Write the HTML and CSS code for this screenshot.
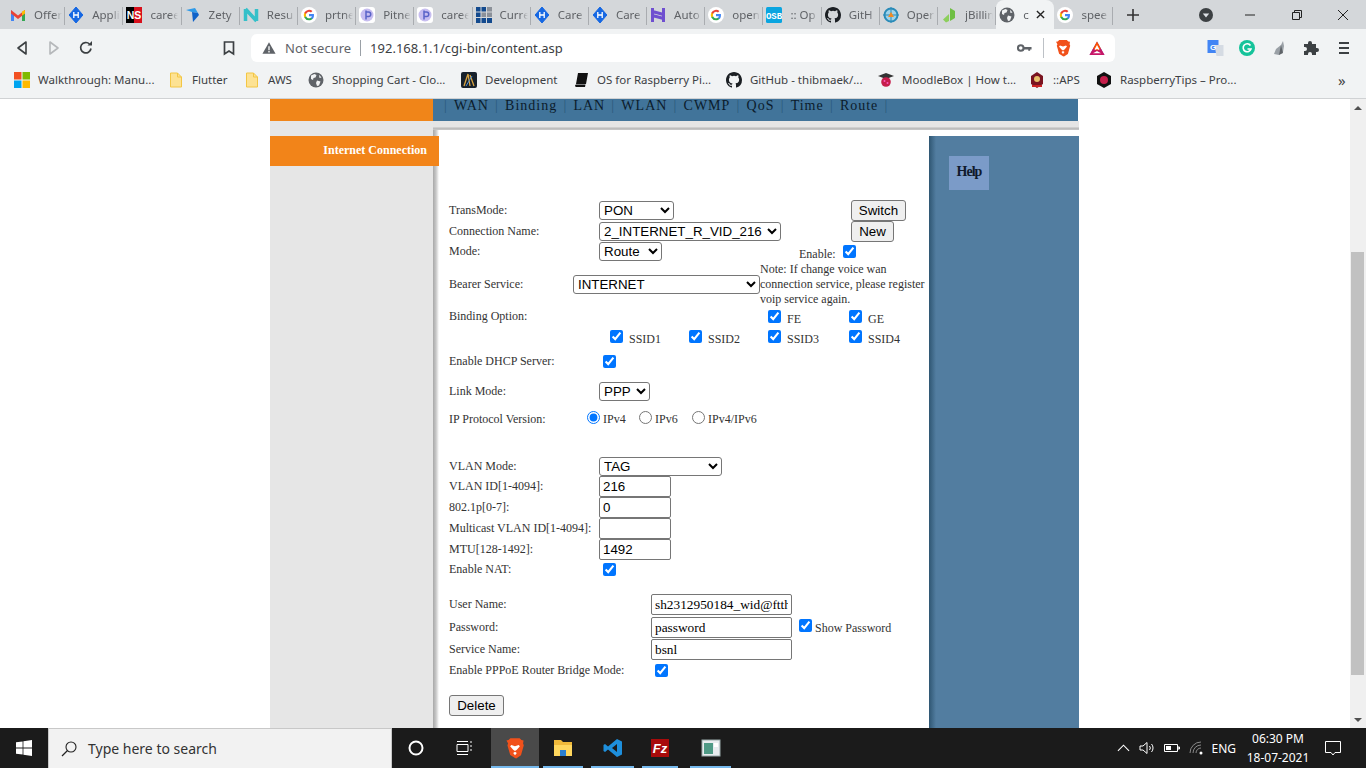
FILE: index.html
```html
<!DOCTYPE html>
<html lang="en">
<head>
  <meta charset="UTF-8" />
  <title>content.asp</title>
  <link rel="stylesheet" href="styles.css">
</head>
<body>
  <svg class="defs" width="0" height="0">
    <symbol id="g" viewBox="0 0 18 18">
      <circle cx="9" cy="9" r="9" fill="#fff"/>
      <path d="M14.6 9.2c0-.4 0-.8-.1-1.200H9v2.300h3.200a2.700 2.700 0 0 1-1.200 1.800v1.500h1.900c1.100-1 1.700-2.600 1.700-4.400z" fill="#4285f4"/>
      <path d="M9 15c1.600 0 3-.5 3.900-1.400L11 12.100c-.5.400-1.200.6-2 .6-1.500 0-2.800-1-3.300-2.400h-2v1.500A6 6 0 0 0 9 15z" fill="#34a853"/>
      <path d="M5.700 10.300a3.600 3.600 0 0 1 0-2.300V6.500h-2a6 6 0 0 0 0 5.300z" fill="#fbbc05"/>
      <path d="M9 5.400c.9 0 1.600.3 2.200.9l1.700-1.700A6 6 0 0 0 3.700 6.500l2 1.500C6.200 6.500 7.500 5.400 9 5.400z" fill="#ea4335"/>
    </symbol>
    <symbol id="hx" viewBox="0 0 16 16">
      <path d="M8 0l6.900 8L8 16 1.100 8z" fill="#1668e3" stroke="#1668e3" stroke-linejoin="round"/>
      <path d="M5.800 5v6M10.200 5v6M5.800 8h4.400" stroke="#fff" stroke-width="1.300" fill="none"/>
    </symbol>
    <symbol id="pp" viewBox="0 0 16 16">
      <rect width="16" height="16" rx="3" fill="#fff"/>
      <circle cx="8" cy="8" r="6.500" fill="#c7bdf0"/>
      <path d="M7 3.500v9M7 5h2.500a2 2 0 0 1 0 4.500H7" stroke="#5a63c8" stroke-width="1.500" fill="none"/>
    </symbol>
    <symbol id="gh" viewBox="0 0 16 16">
      <path fill="currentColor" d="M8 0C3.580 0 0 3.580 0 8c0 3.540 2.290 6.530 5.470 7.590.4.070.55-.170.55-.380 0-.190-.010-.820-.010-1.490-2.010.370-2.530-.490-2.690-.940-.090-.230-.480-.940-.820-1.130-.280-.150-.680-.520-.010-.530.630-.010 1.080.580 1.230.820.720 1.210 1.870.870 2.330.660.070-.520.280-.870.510-1.070-1.780-.200-3.640-.890-3.640-3.950 0-.870.310-1.590.820-2.150-.080-.200-.360-1.020.080-2.120 0 0 .670-.210 2.200.820a7.420 7.420 0 0 1 4 0c1.530-1.040 2.200-.820 2.200-.820.440 1.100.160 1.920.080 2.120.510.560.820 1.270.820 2.150 0 3.070-1.870 3.750-3.650 3.950.290.250.540.730.540 1.480 0 1.070-.010 1.930-.010 2.200 0 .210.150.460.550.380A8.010 8.010 0 0 0 16 8c0-4.420-3.580-8-8-8z"/>
    </symbol>
    <symbol id="globe" viewBox="0 0 16 16">
      <circle cx="8" cy="8" r="7.500" fill="currentColor"/>
      <path d="M3 3.500l3.500-1.500 2 1-1 2.500-2 .5-.5 2-2-1zM9 8.500l3.500 1-1.500 4-2 .5-1-3zM11 2.800l2.500 2.700-2 .5z" fill="#f1f3f4"/>
    </symbol>
    <symbol id="folder" viewBox="0 0 16 16">
      <path d="M2.500 1h7l4 4v10h-11z" fill="#fde293" stroke="#f3c644"/>
      <path d="M9.500 1v4h4" fill="none" stroke="#f3c644"/>
    </symbol>
    <symbol id="brave" viewBox="0 0 16 18">
      <path d="M4.200 1h7.600l1.500 1.500 1.700.300-.4 2.500.6 1.500-2.300 8.200-3.900 2.500-1-.3-3.900-2.400L1.800 6.800l.6-1.500L1 2.800l1.700-.300z" fill="#f1511b"/>
      <path d="M5 6.500l3 1 3-1 1 1-2.500 3-1.500 1-1.500-1L4 7.500zM6.500 13l1.500-1 1.500 1-1.500 2z" fill="#fff"/>
    </symbol>
  </svg>

  <header class="tabstrip">
    <div class="tab"><svg class="fav" viewBox="0 0 16 16"><path d="M1 3v11h3V7z" fill="#4285f4"/><path d="M15 3v11h-3V7z" fill="#34a853"/><path d="M1 3l7 5.500L15 3v3.500L8 12 1 6.500z" fill="#ea4335"/><path d="M12 4.500L15 3v3.500l-3 2z" fill="#fbbc05"/></svg><span class="tab-t">Offer</span></div>
    <div class="tab"><svg class="fav"><use href="#hx"/></svg><span class="tab-t">Appli</span></div>
    <div class="tab"><svg class="fav" viewBox="0 0 16 16"><rect width="8" height="16"/><rect x="8" width="8" height="16" fill="#d8101c"/><text x="8" y="12" font-size="10.500" font-weight="700" fill="#fff" text-anchor="middle" font-family="Liberation Sans">NS</text></svg><span class="tab-t">caree</span></div>
    <div class="tab"><svg class="fav" viewBox="0 0 16 16"><path d="M1 3l9-2 3 5-6-1z" fill="#2f9ae8"/><path d="M7 5l6 1 1 2-6 7z" fill="#0f62c9"/></svg><span class="tab-t">Zety</span></div>
    <div class="tab"><svg class="fav" viewBox="0 0 16 16"><path d="M2.500 2v12M13.500 2v12M2.500 2l11 12" stroke="#35c0c9" stroke-width="3.500" fill="none"/></svg><span class="tab-t">Resu</span></div>
    <div class="tab"><svg class="fav"><use href="#g"/></svg><span class="tab-t">prtne</span></div>
    <div class="tab"><svg class="fav"><use href="#pp"/></svg><span class="tab-t">Pitne</span></div>
    <div class="tab"><svg class="fav"><use href="#pp"/></svg><span class="tab-t">caree</span></div>
    <div class="tab"><svg class="fav" viewBox="0 0 16 16"><path d="M0 0h4.500v4.500H0zM5.500 0H10v4.500H5.500zM0 5.500h4.500V10H0zM0 11h4.500v5H0zM5.500 11H10v5H5.500z" fill="#134a8e"/><path d="M11 0h5v4.500h-5zM5.500 5.500H10V10H5.500zM11 5.500h5V10h-5z" fill="#8c9199"/><path d="M11 11h5v5h-5z" fill="#134a8e"/></svg><span class="tab-t">Curre</span></div>
    <div class="tab"><svg class="fav"><use href="#hx"/></svg><span class="tab-t">Care</span></div>
    <div class="tab"><svg class="fav"><use href="#hx"/></svg><span class="tab-t">Care</span></div>
    <div class="tab"><svg class="fav" viewBox="0 0 16 16"><path d="M2.500 1v14M13.500 1v14M2.500 4.500l11 3M2.500 8.500l11 3" stroke="#6f4fd0" stroke-width="3" fill="none"/></svg><span class="tab-t">Auto</span></div>
    <div class="tab"><svg class="fav"><use href="#g"/></svg><span class="tab-t">open</span></div>
    <div class="tab"><svg class="fav" viewBox="0 0 16 16"><rect width="16" height="16" rx="1.500" fill="#0aa5e0"/><text x="8" y="12" font-size="9" font-weight="700" fill="#fff" text-anchor="middle" font-family="Liberation Mono">OSB</text></svg><span class="tab-t">:: Op</span></div>
    <div class="tab"><svg class="fav gh"><use href="#gh"/></svg><span class="tab-t">GitH</span></div>
    <div class="tab"><svg class="fav" viewBox="0 0 16 16"><circle cx="8" cy="8" r="6.500" fill="#9fd3ea" stroke="#2a8bb8" stroke-width="2"/><path d="M8 0v16M0 8h16" stroke="#2a8bb8"/><path d="M5 10l3-5 3 5z" fill="#f08a24"/></svg><span class="tab-t">Oper</span></div>
    <div class="tab"><svg class="fav" viewBox="0 0 16 16"><path d="M9 1l5 3v7l-5 3z" fill="#6fbf44"/><path d="M8 7v7l-3 1.500-3-3z" fill="#8ccf5c"/></svg><span class="tab-t">jBillin</span></div>
    <div class="tab tab-active"><svg class="fav gl"><use href="#globe"/></svg><span class="tab-t tab-t-short">c</span><svg class="tab-x" viewBox="0 0 10 10"><path d="M1 1l8 8M9 1l-8 8" stroke="#222" stroke-width="1.500"/></svg></div>
    <div class="tab"><svg class="fav"><use href="#g"/></svg><span class="tab-t">spee</span></div>
    <svg class="newtab" viewBox="0 0 14 14"><path d="M7 1v12M1 7h12" stroke="#333" stroke-width="1.600"/></svg>
    <div class="win-btns">
      <svg class="wb-down" viewBox="0 0 14 14"><circle cx="7" cy="7" r="7" fill="#3c4043"/><path d="M3.800 5.500h6.400L7 9.500z" fill="#dee1e6"/></svg>
      <svg class="wb" viewBox="0 0 12 12"><path d="M1 6h10" stroke="#222"/></svg>
      <svg class="wb" viewBox="0 0 12 12"><path d="M1.500 3.500h7v7h-7zM3.500 3.500v-2h7v7h-2" stroke="#222" fill="none"/></svg>
      <svg class="wb" viewBox="0 0 12 12"><path d="M1 1l10 10M11 1L1 11" stroke="#222"/></svg>
    </div>
  </header>

  <div class="toolbar">
    <svg class="tb tb-back" viewBox="0 0 16 16"><path d="M12 2L4 8l8 6z" fill="none" stroke="#3c4043" stroke-width="1.600" stroke-linejoin="round"/></svg>
    <svg class="tb tb-fwd" viewBox="0 0 16 16"><path d="M4 2l8 6-8 6z" fill="none" stroke="#b6b8bb" stroke-width="1.600" stroke-linejoin="round"/></svg>
    <svg class="tb tb-reload" viewBox="0 0 16 16"><path d="M13 8.500A5.200 5.200 0 1 1 11.500 4" fill="none" stroke="#3c4043" stroke-width="1.700"/><path d="M9.500 5.500H14V1z" fill="#3c4043"/></svg>
    <svg class="tb tb-mark" viewBox="0 0 16 16"><path d="M3.500 2h9v12L8 11l-4.500 3z" fill="none" stroke="#3c4043" stroke-width="1.700"/></svg>
    <div class="omnibox">
      <svg class="warn" viewBox="0 0 16 16"><path d="M8 1.500l7.500 13H.5z" fill="#5f6368"/><path d="M8 6v4.500M8 11.500v1.500" stroke="#fff" stroke-width="1.500"/></svg>
      <span class="not-secure">Not secure</span>
      <span class="url">192.168.1.1/cgi-bin/content.asp</span>
      <svg class="key" viewBox="0 0 16 10"><circle cx="4" cy="5" r="3" fill="none" stroke="#5f6368" stroke-width="2.200"/><path d="M7 4h8.500v2.500h-1.500V8h-2V6.500H7z" fill="#5f6368"/></svg>
      <span class="omni-sep"></span>
      <svg class="omni-brave"><use href="#brave"/></svg>
      <svg class="omni-bat" viewBox="0 0 18 16"><path d="M9 1.500l7.500 13.500h-15z" fill="#662d91"/><path d="M9 1.500l3.800 7L9 11l-3.800-2.500z" fill="#ff5000"/><path d="M9 5l-3 5.500L9 9l3 1.500z" fill="#fff"/><path d="M1.500 15h15l-3.700-6.500-3.800 2.500-3.800-2.500z" fill="#e0105c" opacity=".8"/><path d="M5 13.200h8L9 11z" fill="#fff"/></svg>
    </div>
    <svg class="ext ext-gt" viewBox="0 0 16 16"><rect width="11" height="13" fill="#4285f4"/><path d="M7 5h9v11H9z" fill="#d5dbe3"/><text x="5.500" y="9.500" font-size="8" font-weight="700" fill="#fff" text-anchor="middle" font-family="Liberation Sans">G</text></svg>
    <svg class="ext ext-gr" viewBox="0 0 16 16"><circle cx="8" cy="8" r="8" fill="#15c39a"/><path d="M11.500 5.500A4 4 0 1 0 12 9H8.500" fill="none" stroke="#fff" stroke-width="1.600"/></svg>
    <svg class="ext ext-gy" viewBox="0 0 16 16"><path d="M11 1L9 5 4 9l-2 5 5 1 4-3 1-6z" fill="#9aa0a6"/><path d="M9 5l2 8-4 2z" fill="#5f6368"/></svg>
    <svg class="ext ext-pz" viewBox="0 0 16 16"><path d="M1 4h4V3a2 2 0 0 1 4 0v1h4v4h1a2 2 0 0 1 0 4h-1v3H9v-1a2 2 0 0 0-4 0v1H1v-4h1a2 2 0 0 0 0-4H1z" fill="#3c4043"/></svg>
    <svg class="ext ext-mn" viewBox="0 0 16 16"><path d="M3 3h10M3 8h10M3 13h10" stroke="#3c4043" stroke-width="2"/></svg>
  </div>

  <nav class="bookmarks">
    <a class="bm"><svg class="bm-i" viewBox="0 0 16 16"><path d="M0 0h7.500v7.500H0z" fill="#f25022"/><path d="M8.500 0H16v7.500H8.500z" fill="#7fba00"/><path d="M0 8.500h7.500V16H0z" fill="#00a4ef"/><path d="M8.500 8.500H16V16H8.500z" fill="#ffb900"/></svg>Walkthrough: Manu...</a>
    <a class="bm"><svg class="bm-i"><use href="#folder"/></svg>Flutter</a>
    <a class="bm"><svg class="bm-i"><use href="#folder"/></svg>AWS</a>
    <a class="bm"><svg class="bm-i gl"><use href="#globe"/></svg>Shopping Cart - Clo...</a>
    <a class="bm"><svg class="bm-i" viewBox="0 0 16 16"><rect width="16" height="16" rx="2" fill="#17212b"/><path d="M3 14L7 2l2 12M9 3l4 11" stroke="#d9a441" stroke-width="1.300" fill="none"/><path d="M5 14l6-10" stroke="#4b8fd6"/></svg>Development</a>
    <a class="bm"><svg class="bm-i" viewBox="0 0 16 16"><path d="M5 1h10l-2 11H3zM3 12.500h9.500L12 15H3a1.300 1.300 0 0 1 0-2.500z" fill="#111"/></svg>OS for Raspberry Pi...</a>
    <a class="bm"><svg class="bm-i gh"><use href="#gh"/></svg>GitHub - thibmaek/...</a>
    <a class="bm"><svg class="bm-i" viewBox="0 0 16 16"><path d="M0 4l8-3 8 3-8 3z" fill="#333"/><circle cx="8" cy="10" r="4.800" fill="#c51d4a"/><circle cx="6.500" cy="9" r="1" fill="#f5b"/><circle cx="9.500" cy="11" r="1" fill="#f5b"/></svg>MoodleBox | How t...</a>
    <a class="bm"><svg class="bm-i" viewBox="0 0 16 16"><path d="M8 0l6 4v8l-6 4-6-4V4z" fill="#7a1420"/><circle cx="8" cy="7" r="3" fill="#e8c06a"/><path d="M3 13h10v2H3z" fill="#c22"/></svg>::APS</a>
    <a class="bm"><svg class="bm-i" viewBox="0 0 16 16"><path d="M8 0l7 4v8l-7 4-7-4V4z" fill="#111"/><circle cx="8" cy="8" r="4" fill="#c51d4a"/></svg>RaspberryTips – Pro...</a>
    <span class="bm-more">»</span>
  </nav>

  <div class="viewport">
    <div class="frame">
      <div class="head">
        <div class="head-logo"></div>
        <div class="head-nav">
          <span class="sep">|</span><span>WAN</span>
          <span class="sep">|</span><span>Binding</span>
          <span class="sep">|</span><span>LAN</span>
          <span class="sep">|</span><span>WLAN</span>
          <span class="sep">|</span><span>CWMP</span>
          <span class="sep">|</span><span>QoS</span>
          <span class="sep">|</span><span>Time</span>
          <span class="sep">|</span><span>Route</span>
          <span class="sep">|</span>
        </div>
      </div>
      <div class="columns">
        <aside class="sidebar">
          <div class="side-item">Internet Connection</div>
        </aside>
        <div class="right">
          <div class="band"></div>
          <div class="panels">
            <main class="main">
              <form class="wan-form">
                <div class="row h21">
                  <label class="lbl">TransMode:</label>
                  <select class="s-trans"><option>PON</option></select>
                  <button type="button" class="btn b-switch">Switch</button>
                </div>
                <div class="row h21">
                  <label class="lbl">Connection Name:</label>
                  <select class="s-conn"><option>2_INTERNET_R_VID_216</option></select>
                  <button type="button" class="btn b-new">New</button>
                </div>
                <div class="row h19">
                  <label class="lbl">Mode:</label>
                  <select class="s-mode"><option>Route</option></select>
                  <span class="enable-lbl">Enable:</span>
                  <input type="checkbox" class="cb" checked>
                </div>
                <div class="row h45 mt1">
                  <label class="lbl lbl-bearer">Bearer Service:</label>
                  <select class="s-bearer"><option>INTERNET</option></select>
                  <p class="note">Note: If change voice wan connection service, please register voip service again.</p>
                </div>
                <div class="row h20 binds">
                  <label class="lbl lbl-bind">Binding Option:</label>
                  <span class="bind"></span>
                  <span class="bind"></span>
                  <span class="bind b3"><input type="checkbox" class="cb" checked><span class="low">FE</span></span>
                  <span class="bind"><input type="checkbox" class="cb" checked><span class="low">GE</span></span>
                </div>
                <div class="row h20 binds">
                  <span class="lbl lbl-bind"></span>
                  <span class="bind"><input type="checkbox" class="cb" checked><span class="low">SSID1</span></span>
                  <span class="bind"><input type="checkbox" class="cb" checked><span class="low">SSID2</span></span>
                  <span class="bind b3"><input type="checkbox" class="cb" checked><span class="low">SSID3</span></span>
                  <span class="bind"><input type="checkbox" class="cb" checked><span class="low">SSID4</span></span>
                </div>
                <div class="row h29">
                  <label class="lbl lbl-dhcp">Enable DHCP Server:</label>
                  <input type="checkbox" class="cb" checked>
                </div>
                <div class="row h31">
                  <label class="lbl">Link Mode:</label>
                  <select class="s-link"><option>PPP</option></select>
                </div>
                <div class="row h21 radios">
                  <label class="lbl lbl-ip">IP Protocol Version:</label>
                  <input type="radio" name="ipv" class="rd" checked><span class="r-t r1 low">IPv4</span>
                  <input type="radio" name="ipv" class="rd"><span class="r-t r2 low">IPv6</span>
                  <input type="radio" name="ipv" class="rd"><span class="r-t low">IPv4/IPv6</span>
                </div>
                <div class="row h19 vlan-first">
                  <label class="lbl">VLAN Mode:</label>
                  <select class="s-vlan"><option>TAG</option></select>
                </div>
                <div class="row h21"><label class="lbl">VLAN ID[1-4094]:</label><input class="txt" value="216"></div>
                <div class="row h21"><label class="lbl">802.1p[0-7]:</label><input class="txt" value="0"></div>
                <div class="row h21"><label class="lbl">Multicast VLAN ID[1-4094]:</label><input class="txt"></div>
                <div class="row h21"><label class="lbl">MTU[128-1492]:</label><input class="txt" value="1492"></div>
                <div class="row h19">
                  <label class="lbl lbl-dhcp">Enable NAT:</label>
                  <input type="checkbox" class="cb" checked>
                </div>
                <div class="row h21 user-first">
                  <label class="lbl lbl-user">User Name:</label>
                  <input class="txt txt-user" value="sh2312950184_wid@ftth">
                </div>
                <div class="row h21 mt2">
                  <label class="lbl lbl-user">Password:</label>
                  <input class="txt txt-user" value="password">
                  <input type="checkbox" class="cb cb-show" checked><span class="show-t">Show Password</span>
                </div>
                <div class="row h21 mt1">
                  <label class="lbl lbl-user">Service Name:</label>
                  <input class="txt txt-user" value="bsnl">
                </div>
                <div class="row h21">
                  <label class="lbl lbl-pppoe">Enable PPPoE Router Bridge Mode:</label>
                  <input type="checkbox" class="cb" checked>
                </div>
                <button type="button" class="btn b-delete">Delete</button>
              </form>
            </main>
            <aside class="help">
              <div class="help-btn">Help</div>
            </aside>
          </div>
        </div>
      </div>
    </div>
    <div class="scrollbar">
      <div class="sb-btn"><span class="arrow-up"></span></div>
      <div class="sb-thumb"></div>
      <div class="sb-btn sb-btn-end"><span class="arrow-down"></span></div>
    </div>
  </div>

  <footer class="taskbar">
    <svg class="tk-win" viewBox="0 0 16 16"><path d="M0 2.300l6.600-.9v6.200H0zM7.400 1.300L16 0v7.600H7.400zM0 8.400h6.600v6.200L0 13.700zM7.400 8.400H16V16l-8.600-1.300z" fill="#fff"/></svg>
    <div class="tk-search">
      <svg class="tk-glass" viewBox="0 0 16 16"><circle cx="10" cy="6" r="5" fill="none" stroke="#222" stroke-width="1.100"/><path d="M6.500 9.500L1 15" stroke="#222" stroke-width="1.200"/></svg>
      <span>Type here to search</span>
    </div>
    <div class="tk-slot tk-plain"><svg class="tk-ic" viewBox="0 0 16 16"><circle cx="8" cy="8" r="6.500" fill="none" stroke="#fff" stroke-width="2"/></svg></div>
    <div class="tk-slot tk-plain"><svg class="tk-ic" viewBox="0 0 16 16"><path d="M1 4.500h11v7H1zM1 1.500h11M1 14.500h11M15 1v2M15 5v2M15 9v2" fill="none" stroke="#fff"/></svg></div>
    <div class="tk-slot tk-app tk-active"><svg class="tk-app-i"><use href="#brave"/></svg></div>
    <div class="tk-slot tk-app tk-w48"><svg class="tk-app-i" viewBox="0 0 20 20"><path d="M1 2h7l2 2h9v14H1z" fill="#f0b93a"/><path d="M1 7h18v11H1z" fill="#ffd75e"/><path d="M7 12h6v6H7z" fill="#2a7fd1"/></svg></div>
    <div class="tk-slot tk-app tk-w50"><svg class="tk-app-i" viewBox="0 0 20 20"><path d="M14 1l5 2.500v13L14 19 5 11.500 2 14 .5 13v-6L2 6l3 2.500z" fill="#1e8fdc"/><path d="M14 6l-5 4 5 4z" fill="#1b1b1b"/></svg></div>
    <div class="tk-slot tk-app tk-w44"><svg class="tk-app-i" viewBox="0 0 20 20"><rect x="1" y="1" width="18" height="18" fill="#a80b0b"/><text x="10" y="15" font-size="13" font-weight="700" font-style="italic" fill="#fff" text-anchor="middle" font-family="Liberation Sans">Fz</text></svg></div>
    <div class="tk-slot tk-app tk-w58"><svg class="tk-app-i" viewBox="0 0 20 20"><rect x="1" y="2" width="18" height="16" fill="#e8ecef" stroke="#9aa"/><rect x="3" y="5" width="9" height="11" fill="#4f9a86"/><rect x="13" y="5" width="4" height="4" fill="#fff"/></svg></div>
    <div class="tray">
      <svg class="tr-chev" viewBox="0 0 14 8"><path d="M1 7l6-6 6 6" fill="none" stroke="#fff" stroke-width="1.200"/></svg>
      <svg class="tr-vol" viewBox="0 0 16 16"><path d="M1 6h3l4-3.500v11L4 10H1zM10.500 6a3 3 0 0 1 0 4M12.500 4a6 6 0 0 1 0 8" fill="none" stroke="#fff"/></svg>
      <svg class="tr-bat" viewBox="0 0 16 10"><path d="M.5 1.500h13v7H.5zM14 4h1.500v2H14z" fill="none" stroke="#fff"/><rect x="2" y="3" width="5" height="4" fill="#fff"/></svg>
      <svg class="tr-wifi" viewBox="0 0 16 16"><path d="M1 13A11 11 0 0 1 12 2M4 13A8 8 0 0 1 12 5M7 13a5 5 0 0 1 5-5" fill="none" stroke="#8a8a8a"/><circle cx="12" cy="13" r="1.500" fill="#fff"/></svg>
      <span class="tr-lang">ENG</span>
      <div class="tr-clock"><span>06:30 PM</span><span>18-07-2021</span></div>
      <svg class="tr-note" viewBox="0 0 16 16"><path d="M.5 1.500h15v11H10L8 15l-2-2.500H.5z" fill="none" stroke="#fff"/></svg>
    </div>
  </footer>
</body>
</html>
```

FILE: styles.css
```css
* {
  box-sizing: border-box;
}
html, body {
  margin: 0;
  height: 100%;
  overflow: hidden;
}
body {
  display: flex;
  flex-direction: column;
  width: 1366px;
  height: 768px;
  background: #fff;
  font-family: "Noto Sans", sans-serif;
  color: #222;
}
.defs {
  position: absolute;
}

/* browser chrome */
.tabstrip {
  display: flex;
  align-items: center;
  flex: none;
  height: 29px;
  padding-left: 7px;
  background: #d4d7da;
}
.tab {
  display: flex;
  align-items: center;
  flex: none;
  width: 58.2px;
  height: 29px;
  padding-left: 3px;
  position: relative;
}
.tab::after {
  content: "";
  position: absolute;
  right: 0;
  top: 7px;
  height: 18px;
  width: 1px;
  background: #a9acb0;
}
.tab-active {
  background: #f1f3f4;
  border-radius: 8px 8px 0 0;
}
.tab-active::after {
  display: none;
}
.fav {
  flex: none;
  width: 16px;
  height: 16px;
}
.gh {
  color: #1b1f23;
}
.gl {
  color: #5f6368;
}
.tab-t {
  flex: none;
  width: 28px;
  margin-left: 8px;
  overflow: hidden;
  white-space: nowrap;
  font-size: 11.5px;
  color: #5f6266;
  -webkit-mask-image: linear-gradient(90deg, #000 70%, transparent);
  mask-image: linear-gradient(90deg, #000 70%, transparent);
}
.tab-t-short {
  width: 10px;
}
.tab-x {
  width: 9px;
  height: 9px;
  margin-left: 3px;
}
.newtab {
  width: 14px;
  height: 14px;
  margin-left: 13px;
}
.win-btns {
  display: flex;
  align-items: center;
  margin-left: auto;
  gap: 34.5px;
  padding-right: 17px;
}
.wb-down {
  width: 14px;
  height: 14px;
  margin-right: -3.5px;
}
.wb {
  width: 12px;
  height: 12px;
}

.toolbar {
  display: flex;
  align-items: center;
  flex: none;
  height: 33px;
  padding-top: 5px;
  background: #f1f3f4;
}
.tb {
  flex: none;
  width: 16px;
  height: 16px;
}
.tb-back {
  margin-left: 14px;
}
.tb-fwd {
  margin-left: 16px;
}
.tb-reload {
  margin-left: 16px;
}
.tb-mark {
  margin-left: 127px;
}
.omnibox {
  display: flex;
  align-items: center;
  flex: none;
  width: 864px;
  height: 28px;
  margin-left: 14px;
  padding-left: 11px;
  background: #fff;
  border-radius: 6px;
  font-size: 13px;
}
.warn {
  width: 14px;
  height: 14px;
}
.not-secure {
  margin-left: 9px;
  padding-right: 9px;
  border-right: 1px solid #9aa0a6;
  line-height: 16px;
  color: #5f6368;
}
.url {
  margin-left: 9px;
  color: #3c4043;
}
.key {
  width: 15px;
  height: 10px;
  margin-left: auto;
}
.omni-sep {
  width: 1px;
  height: 20px;
  margin: 0 11px;
  background: #bdc1c6;
}
.omni-brave {
  width: 16px;
  height: 18px;
}
.omni-bat {
  width: 18px;
  height: 16px;
  margin: 0 9px 0 17px;
}
.ext {
  flex: none;
  width: 16px;
  height: 16px;
}
.ext-gt {
  margin-left: 92px;
  width: 17px;
}
.ext-gr {
  margin-left: 15px;
}
.ext-gy {
  margin-left: 17px;
}
.ext-pz {
  margin-left: 15px;
}
.ext-mn {
  margin-left: 17px;
}

.bookmarks {
  display: grid;
  grid-template-columns: 154px 76px 64px 153px 112px 153px 152px 151px 67px 242px auto;
  align-items: center;
  flex: none;
  height: 37px;
  padding-left: 14px;
  background: #f1f3f4;
  border-bottom: 1px solid #d0d2d4;
}
.bm {
  display: flex;
  align-items: center;
  padding-bottom: 2px;
  white-space: nowrap;
  font-size: 11.5px;
  color: #3c4043;
}
.bm-i {
  flex: none;
  width: 16px;
  height: 16px;
  margin: 2px 8px 0 0;
}
.bm-more {
  font-size: 15px;
  line-height: 15px;
  color: #444;
}

/* page */
.viewport {
  display: flex;
  flex: 1;
  min-height: 0;
  background: #fff;
}
.frame {
  display: flex;
  flex-direction: column;
  flex: none;
  width: 809px;
  margin-left: 270px;
  overflow: hidden;
}
.head {
  display: flex;
  flex: none;
  height: 22px;
}
.head-logo {
  flex: none;
  width: 163px;
  background: #f08519;
}
.head-nav {
  display: flex;
  align-items: center;
  gap: 6.2px;
  flex: none;
  width: 645px;
  padding: 0 0 9px 11px;
  background: #41749a;
  font-family: "Liberation Serif", serif;
  font-size: 14px;
  letter-spacing: 1px;
  color: #0c1c2c;
}
.sep {
  color: #2b5a7c;
}
.columns {
  display: flex;
  flex: 1;
  min-height: 0;
}
.sidebar {
  flex: none;
  width: 163px;
  padding-top: 15px;
  background: #e6e6e6;
}
.side-item {
  position: relative;
  z-index: 1;
  width: 169px;
  height: 30px;
  padding-right: 12px;
  background: #f28419;
  text-align: right;
  font-family: "Liberation Serif", serif;
  font-size: 12px;
  font-weight: 700;
  line-height: 28px;
  color: #fff;
}
.right {
  display: flex;
  flex-direction: column;
  flex: 1;
  min-width: 0;
}
.band {
  flex: none;
  height: 9px;
  background: linear-gradient(#e5e5e5 6px, #b9b9b9 7px, #c9c9c9 9px);
}
.panels {
  display: flex;
  flex: 1;
  min-height: 0;
}
.main {
  flex: none;
  width: 496px;
  padding: 70px 0 0 16px;
  background: linear-gradient(90deg, #a8a8a8, #c8c8c8 3px, #ececec 5px, #fff 6px) no-repeat left top / 6px 100%, #fff;
}
.help {
  flex: 1;
  margin-top: 6px;
  padding: 20px;
  background: linear-gradient(90deg, #2f5672, #527da0 7px);
}
.help-btn {
  width: 40px;
  height: 34px;
  background: #7b9bc8;
  text-align: center;
  font-family: "Liberation Serif", serif;
  font-size: 14px;
  font-weight: 700;
  letter-spacing: -1px;
  line-height: 32px;
  color: #101a2c;
}

/* form */
.wan-form {
  font-family: "Liberation Serif", serif;
  font-size: 12px;
  color: #333;
}
.row {
  display: flex;
  align-items: center;
}
.h19 { height: 19px; }
.h20 { height: 20px; }
.h21 { height: 21px; }
.h29 { height: 29px; }
.h31 { height: 31px; }
.h45 { height: 45px; }
.mt1 { margin-top: 1px; }
.mt2 { margin-top: 2px; }
.vlan-first {
  margin-top: 29px;
}
.user-first {
  margin-top: 15px;
}
.lbl {
  flex: none;
  width: 150px;
}
.lbl-bearer { width: 124px; }
.lbl-bind {
  width: 161px;
  margin-bottom: 2px;
}
.lbl-dhcp { width: 154px; }
.lbl-ip {
  width: 138px;
  margin-top: 4px;
}
.lbl-user { width: 202px; }
.lbl-pppoe { width: 206px; }
select, .btn, .txt {
  font-family: "Liberation Sans", sans-serif;
  font-size: 13.333px;
  color: #000;
}
select {
  flex: none;
  height: 19px;
  padding: 0;
  background: #fff;
  border: 1px solid #767676;
  border-radius: 3px;
}
.s-trans { width: 75px; }
.s-conn { width: 182px; }
.s-mode { width: 63px; }
.s-bearer { width: 187px; }
.s-link { width: 51px; }
.s-vlan { width: 123px; }
.btn {
  flex: none;
  height: 21px;
  padding: 0;
  background: #efefef;
  border: 1px solid #767676;
  border-radius: 3px;
}
.b-switch {
  width: 55px;
  margin-left: 177px;
}
.b-new {
  width: 43px;
  margin-left: 70px;
}
.b-delete {
  width: 55px;
  margin-top: 14px;
}
.enable-lbl {
  margin: 6px 0 0 137px;
  width: 44px;
}
.cb, .rd {
  flex: none;
  width: 13px;
  height: 13px;
  margin: 0;
}
.note {
  flex: none;
  width: 168px;
  margin: 0;
  line-height: 15px;
}
.bind {
  display: flex;
  align-items: center;
  gap: 6px;
  flex: none;
  width: 79px;
}
.bind.b3 {
  width: 81px;
}
.bind .cb {
  margin-bottom: 1px;
}
.low {
  margin-top: 4px;
}
.r-t {
  margin-left: 3px;
}
.r1 { width: 36px; }
.r2 { width: 37px; }
.txt {
  flex: none;
  width: 72px;
  height: 21px;
  padding: 1px 3px;
  background: #fff;
  border: 1px solid #767676;
  border-radius: 2px;
}
.txt-user {
  width: 141px;
  font-family: "Liberation Serif", serif;
  font-size: 13.333px;
}
.cb-show {
  margin: 0 0 4px 7px;
}
.show-t {
  margin: 1px 0 0 3px;
}

/* scrollbar */
.scrollbar {
  display: flex;
  flex-direction: column;
  flex: none;
  width: 16px;
  margin-left: auto;
  background: #f0f0f0;
}
.sb-btn {
  display: flex;
  justify-content: center;
  align-items: center;
  flex: none;
  height: 17px;
}
.sb-btn-end {
  margin-top: auto;
}
.arrow-up {
  border: 4px solid transparent;
  border-top: 0;
  border-bottom: 4px solid #505050;
}
.arrow-down {
  border: 4px solid transparent;
  border-bottom: 0;
  border-top: 4px solid #505050;
}
.sb-thumb {
  flex: none;
  width: 13px;
  height: 423px;
  margin: 136px 0 0 1px;
  background: #c1c1c1;
}

/* windows taskbar */
.taskbar {
  display: flex;
  align-items: center;
  flex: none;
  height: 40px;
  background: #1b1b1b;
}
.tk-win {
  flex: none;
  width: 16px;
  height: 16px;
  margin: 0 16px;
}
.tk-search {
  display: flex;
  align-items: center;
  flex: none;
  width: 344px;
  height: 40px;
  padding-left: 12px;
  background: #f2f2f2;
  border: 1px solid #c8c8c8;
  border-bottom: 0;
  font-size: 14px;
  color: #333;
}
.tk-glass {
  width: 16px;
  height: 16px;
  margin-right: 11px;
}
.tk-slot {
  display: flex;
  justify-content: center;
  align-items: center;
  flex: none;
  height: 40px;
}
.tk-plain {
  width: 48px;
}
.tk-ic {
  width: 16px;
  height: 16px;
}
.tk-app {
  position: relative;
}
.tk-app::after {
  content: "";
  position: absolute;
  left: 4px;
  right: 4px;
  bottom: 0;
  height: 2px;
  background: #76b9ed;
}
.tk-active {
  width: 48px;
  margin-left: 3px;
  background: #4a4a4a;
}
.tk-active::after {
  left: 0;
  right: 0;
}
.tk-w48 { width: 48px; }
.tk-w50 { width: 51px; }
.tk-w44 { width: 44px; }
.tk-w58 { width: 58px; }
.tk-w58::after {
  left: 8px;
  right: 9px;
}
.tk-app-i {
  width: 20px;
  height: 22px;
}
.tray {
  display: flex;
  align-items: center;
  margin-left: auto;
  color: #fff;
}
.tr-chev {
  width: 13px;
  height: 8px;
  margin-right: 9px;
}
.tr-vol {
  width: 16px;
  height: 16px;
  margin-right: 9px;
}
.tr-bat {
  width: 16px;
  height: 10px;
  margin-right: 9px;
}
.tr-wifi {
  width: 16px;
  height: 16px;
  margin-right: 6px;
}
.tr-lang {
  font-size: 12px;
  margin-right: 10px;
}
.tr-clock {
  display: flex;
  flex-direction: column;
  align-items: center;
  gap: 3px;
  width: 64px;
  white-space: nowrap;
  font-size: 12px;
  line-height: 16px;
}
.tr-note {
  width: 16px;
  height: 16px;
  margin: 0 25px 0 15px;
}
```
